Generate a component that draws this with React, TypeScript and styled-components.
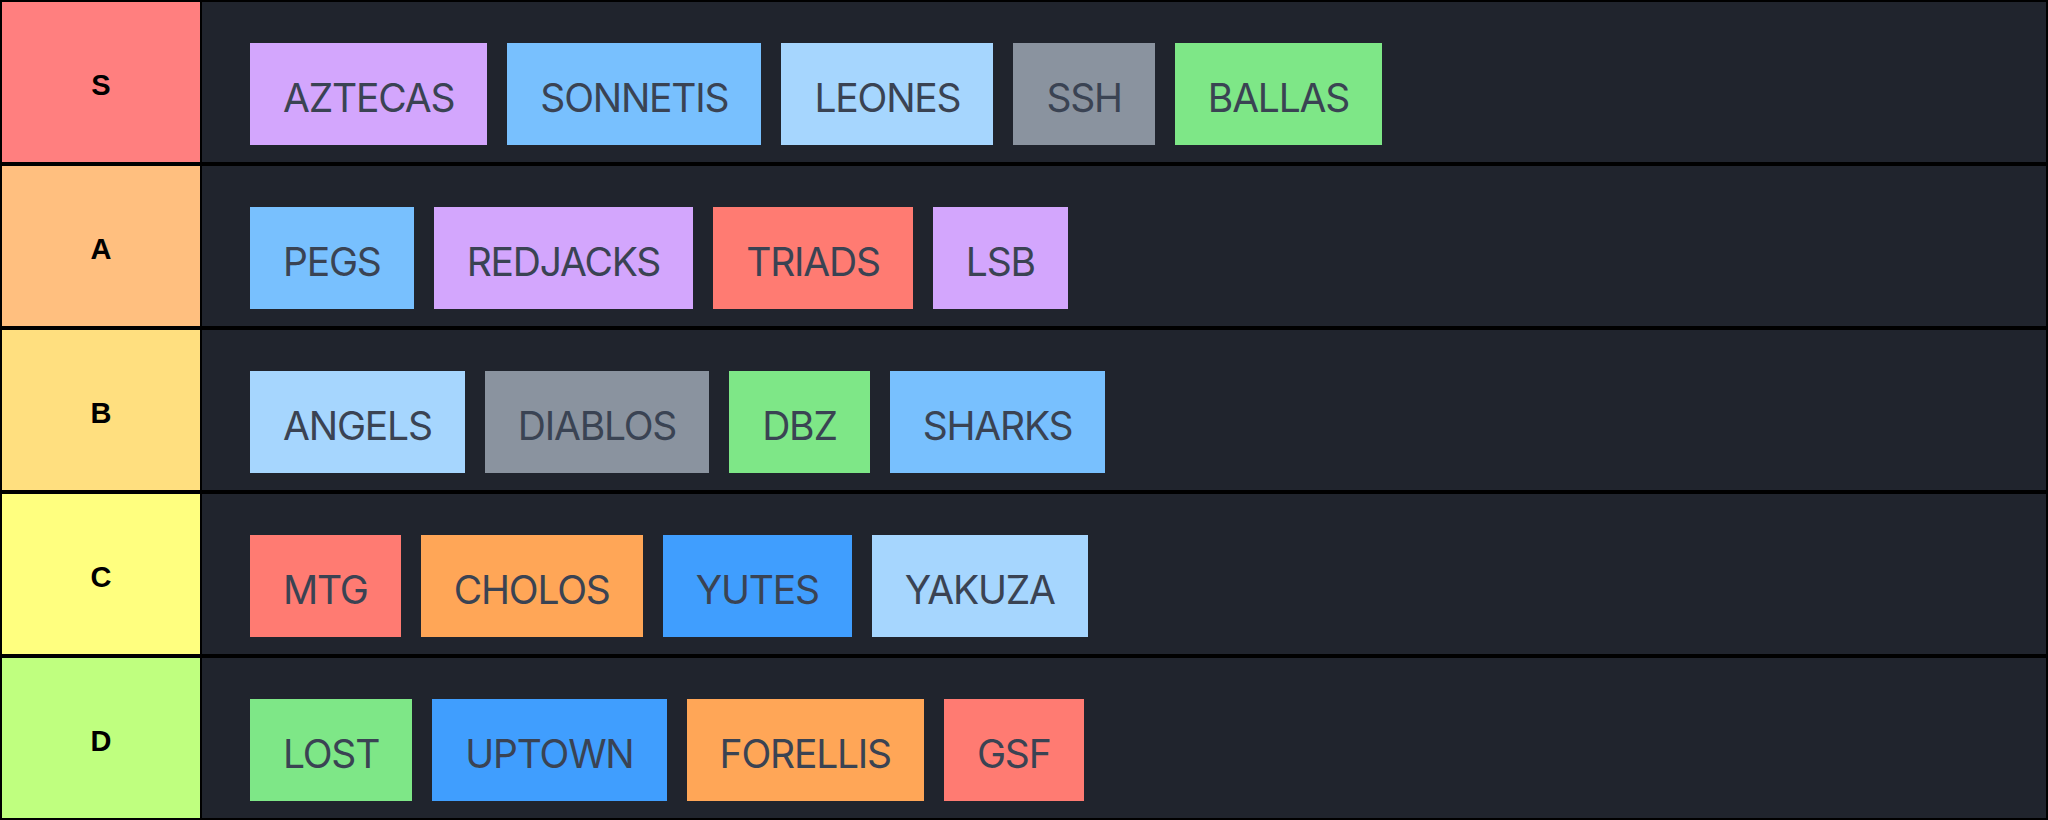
import React from "react";
import styled, { createGlobalStyle } from "styled-components";

const GlobalStyle = createGlobalStyle`
  html, body {
    margin: 0;
    padding: 0;
    background: #000;
  }
  * {
    box-sizing: border-box;
  }
`;

type Gang = { name: string; color: string };
type Tier = { label: string; color: string; gangs: Array<Gang> };

const palette = {
  purple: "#d3a6fd",
  blue: "#78c0fe",
  sky: "#a6d6fe",
  gray: "#8a939f",
  green: "#7ee787",
  red: "#ff7b72",
  orange: "#ffa657",
  azure: "#409efe",
};

const tiers: Array<Tier> = [
  {
    label: "S",
    color: "#ff7f7f",
    gangs: [
      { name: "AZTECAS", color: palette.purple },
      { name: "SONNETIS", color: palette.blue },
      { name: "LEONES", color: palette.sky },
      { name: "SSH", color: palette.gray },
      { name: "BALLAS", color: palette.green },
    ],
  },
  {
    label: "A",
    color: "#ffbf7f",
    gangs: [
      { name: "PEGS", color: palette.blue },
      { name: "REDJACKS", color: palette.purple },
      { name: "TRIADS", color: palette.red },
      { name: "LSB", color: palette.purple },
    ],
  },
  {
    label: "B",
    color: "#ffdf7f",
    gangs: [
      { name: "ANGELS", color: palette.sky },
      { name: "DIABLOS", color: palette.gray },
      { name: "DBZ", color: palette.green },
      { name: "SHARKS", color: palette.blue },
    ],
  },
  {
    label: "C",
    color: "#ffff7f",
    gangs: [
      { name: "MTG", color: palette.red },
      { name: "CHOLOS", color: palette.orange },
      { name: "YUTES", color: palette.azure },
      { name: "YAKUZA", color: palette.sky },
    ],
  },
  {
    label: "D",
    color: "#bfff7f",
    gangs: [
      { name: "LOST", color: palette.green },
      { name: "UPTOWN", color: palette.azure },
      { name: "FORELLIS", color: palette.orange },
      { name: "GSF", color: palette.red },
    ],
  },
];

const Board = styled.div`
  width: 2048px;
  display: flex;
  flex-direction: column;
  background: #000;
`;

const TierRow = styled.div`
  display: flex;
  height: 164px;
  border: 2px solid #000;
`;

const TierLabel = styled.div<{ $color: string }>`
  flex: 0 0 200px;
  display: flex;
  align-items: center;
  justify-content: center;
  padding-top: 6px;
  background-color: ${(p) => p.$color};
  border-right: 2px solid #000;
  color: #000;
  font-family: "Liberation Sans", Arial, sans-serif;
  font-weight: bold;
  font-size: 29px;
`;

const TierItems = styled.div`
  flex: 1;
  display: flex;
  align-items: flex-start;
  gap: 20px;
  padding: 41px 48px 17px;
  background-color: #20242d;
`;

const GangChip = styled.div<{ $color: string }>`
  height: 102px;
  display: flex;
  align-items: center;
  justify-content: center;
  padding: 6px 33px 0;
  background-color: ${(p) => p.$color};
  color: #3a4353;
  font-family: Inter, Roboto, "Liberation Sans", sans-serif;
  font-size: 39px;
  letter-spacing: -1.2px;
  white-space: nowrap;
`;

const App: React.FC = () => {
  return (
    <>
      <GlobalStyle />
      <Board>
        {tiers.map((tier) => (
          <TierRow key={tier.label}>
            <TierLabel $color={tier.color}>{tier.label}</TierLabel>
            <TierItems>
              {tier.gangs.map((gang) => (
                <GangChip key={gang.name} $color={gang.color}>
                  {gang.name}
                </GangChip>
              ))}
            </TierItems>
          </TierRow>
        ))}
      </Board>
    </>
  );
};

export default App;
